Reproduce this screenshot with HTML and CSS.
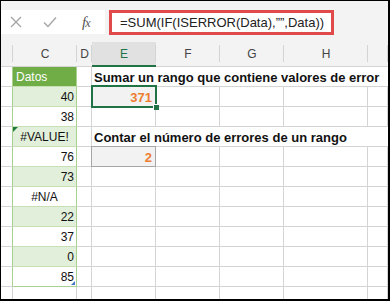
FILE: index.html
```html
<!DOCTYPE html>
<html>

<head>
    <link rel="stylesheet" href="styles.css">
</head>

<body>
    <div class="window">
        <div class="formula-bar">
            <div class="controls">
                <svg class="icon cancel" width="12" height="12" viewBox="0 0 12 12">
                    <path d="M1 1 L11 11 M11 1 L1 11" />
                </svg>
                <svg class="icon enter" width="14" height="12" viewBox="0 0 14 12">
                    <path d="M1 6.5 L5 10.5 L13 1.5" />
                </svg>
                <span class="fx">f<span class="fx-x">x</span></span>
            </div>
            <div class="formula">=SUM(IF(ISERROR(Data),””,Data))</div>
        </div>

        <div class="sheet">
            <!-- column headers -->
            <div class="col-head"></div>
            <div class="col-head">C</div>
            <div class="col-head">D</div>
            <div class="col-head active">E</div>
            <div class="col-head">F</div>
            <div class="col-head">G</div>
            <div class="col-head">H</div>
            <div class="col-head"></div>

            <!-- row 1 -->
            <div class="cell edge"></div>
            <div class="cell data title">Datos</div>
            <div class="cell"></div>
            <div class="cell note">Sumar un rango que contiene valores de error</div>

            <!-- row 2 -->
            <div class="cell edge"></div>
            <div class="cell data band">40</div>
            <div class="cell"></div>
            <div class="cell result selected">371</div>
            <div class="cell"></div>
            <div class="cell"></div>
            <div class="cell"></div>
            <div class="cell"></div>

            <!-- row 3 -->
            <div class="cell edge"></div>
            <div class="cell data">38</div>
            <div class="cell"></div>
            <div class="cell"></div>
            <div class="cell"></div>
            <div class="cell"></div>
            <div class="cell"></div>
            <div class="cell"></div>

            <!-- row 4 -->
            <div class="cell edge"></div>
            <div class="cell data band error flagged">#VALUE!</div>
            <div class="cell"></div>
            <div class="cell note">Contar el número de errores de un rango</div>

            <!-- row 5 -->
            <div class="cell edge"></div>
            <div class="cell data">76</div>
            <div class="cell"></div>
            <div class="cell result boxed">2</div>
            <div class="cell"></div>
            <div class="cell"></div>
            <div class="cell"></div>
            <div class="cell"></div>

            <!-- row 6 -->
            <div class="cell edge"></div>
            <div class="cell data band">73</div>
            <div class="cell"></div>
            <div class="cell"></div>
            <div class="cell"></div>
            <div class="cell"></div>
            <div class="cell"></div>
            <div class="cell"></div>

            <!-- row 7 -->
            <div class="cell edge"></div>
            <div class="cell data error">#N/A</div>
            <div class="cell"></div>
            <div class="cell"></div>
            <div class="cell"></div>
            <div class="cell"></div>
            <div class="cell"></div>
            <div class="cell"></div>

            <!-- row 8 -->
            <div class="cell edge"></div>
            <div class="cell data band">22</div>
            <div class="cell"></div>
            <div class="cell"></div>
            <div class="cell"></div>
            <div class="cell"></div>
            <div class="cell"></div>
            <div class="cell"></div>

            <!-- row 9 -->
            <div class="cell edge"></div>
            <div class="cell data">37</div>
            <div class="cell"></div>
            <div class="cell"></div>
            <div class="cell"></div>
            <div class="cell"></div>
            <div class="cell"></div>
            <div class="cell"></div>

            <!-- row 10 -->
            <div class="cell edge"></div>
            <div class="cell data band">0</div>
            <div class="cell"></div>
            <div class="cell"></div>
            <div class="cell"></div>
            <div class="cell"></div>
            <div class="cell"></div>
            <div class="cell"></div>

            <!-- row 11 -->
            <div class="cell edge"></div>
            <div class="cell data last">85</div>
            <div class="cell"></div>
            <div class="cell"></div>
            <div class="cell"></div>
            <div class="cell"></div>
            <div class="cell"></div>
            <div class="cell"></div>

            <!-- row 12 -->
            <div class="cell"></div>
            <div class="cell"></div>
            <div class="cell"></div>
            <div class="cell"></div>
            <div class="cell"></div>
            <div class="cell"></div>
            <div class="cell"></div>
            <div class="cell"></div>
        </div>
    </div>
</body>

</html>
```

FILE: styles.css
```css
body {
    margin: 0;
    font-family: "Liberation Sans", Arial, sans-serif;
    background: #fff;
}

.window {
    width: 390px;
    height: 301px;
    box-sizing: border-box;
    border: 1px solid #000;
    border-right-width: 2px;
    border-bottom-width: 2px;
    overflow: hidden;
    background: #fff;
}

/* formula bar */

.formula-bar {
    height: 41px;
    box-sizing: border-box;
    padding-top: 9px;
    display: flex;
    align-items: flex-start;
    background: #f3f3f3;
}

.controls {
    width: 104px;
    height: 24px;
    display: flex;
    align-items: center;
    background: #fff;
}

.icon path {
    fill: none;
    stroke: #a6a6a6;
    stroke-width: 1.4;
}

.cancel {
    margin-left: 9px;
}

.enter {
    margin-left: 21px;
}

.fx {
    margin-left: 25px;
    font-family: "Liberation Serif", "Times New Roman", serif;
    font-style: italic;
    font-size: 15px;
    color: #555;
    letter-spacing: -1px;
}

.fx-x {
    font-size: 12px;
}

.formula {
    margin-left: 4px;
    width: 225px;
    height: 25px;
    box-sizing: border-box;
    border: 3px solid #e04a4a;
    padding-left: 8px;
    background: #fff;
    font-size: 13px;
    line-height: 19px;
    color: #222;
    white-space: nowrap;
}

/* grid */

.sheet {
    display: grid;
    grid-template-columns: 12px 64px 15px 64px 64px 64px 84px 1fr;
    grid-template-rows: 25px;
    grid-auto-rows: 20px;
}

.col-head {
    box-sizing: border-box;
    border-bottom: 1px solid #d4d4d4;
    background: linear-gradient(#d4d4d4, #d4d4d4) right 3px / 1px 17px no-repeat, #f3f3f3;
    font-size: 12px;
    line-height: 24px;
    text-align: center;
    color: #444;
}

.col-head.active {
    background-color: #e1e1e1;
    border-bottom: 2px solid #217346;
    color: #217346;
}

.cell {
    box-sizing: border-box;
    border-right: 1px solid #d4d4d4;
    border-bottom: 1px solid #d4d4d4;
    padding: 2px 2px 0;
    font-size: 12px;
    line-height: 17px;
    color: #111;
    white-space: nowrap;
}

.cell.edge {
    border-right-color: #a9d08e;
}

.data {
    position: relative;
    text-align: right;
    border-right-color: #a9d08e;
    border-bottom-color: #c6e0b4;
}

.data.band {
    background: #e2efda;
}

.data.title {
    background: #70ad47;
    color: #fff;
    text-align: left;
    padding-left: 3px;
}

.data.error {
    text-align: center;
}

.data.last {
    border-bottom-color: #a9d08e;
}

/* green error indicator */
.flagged::before {
    content: "";
    position: absolute;
    top: 0;
    left: 0;
    border-top: 5px solid #1e7b3c;
    border-right: 5px solid transparent;
}

/* table resize handle */
.last::after {
    content: "";
    position: absolute;
    right: 1px;
    bottom: 1px;
    border-bottom: 4px solid #4472c4;
    border-left: 4px solid transparent;
}

.note {
    grid-column: span 5;
    border-right: none;
    font-size: 13px;
    font-weight: bold;
    color: #111;
}

.result {
    position: relative;
    background: #f2f2f2;
    text-align: right;
    padding-right: 3px;
    font-size: 13px;
    font-weight: bold;
    color: #ed7d31;
}

.boxed::after {
    content: "";
    position: absolute;
    top: -1px;
    left: -1px;
    right: -1px;
    bottom: -1px;
    border: 1px solid #a6a6a6;
}

.selected::after {
    content: "";
    position: absolute;
    top: -2px;
    left: -1px;
    right: -2px;
    bottom: -2px;
    border: 2px solid #217346;
}

.selected::before {
    content: "";
    position: absolute;
    right: -4px;
    bottom: -4px;
    width: 5px;
    height: 5px;
    background: #217346;
    border: 1px solid #fff;
    border-width: 1px 0 0 1px;
    z-index: 1;
}
```
